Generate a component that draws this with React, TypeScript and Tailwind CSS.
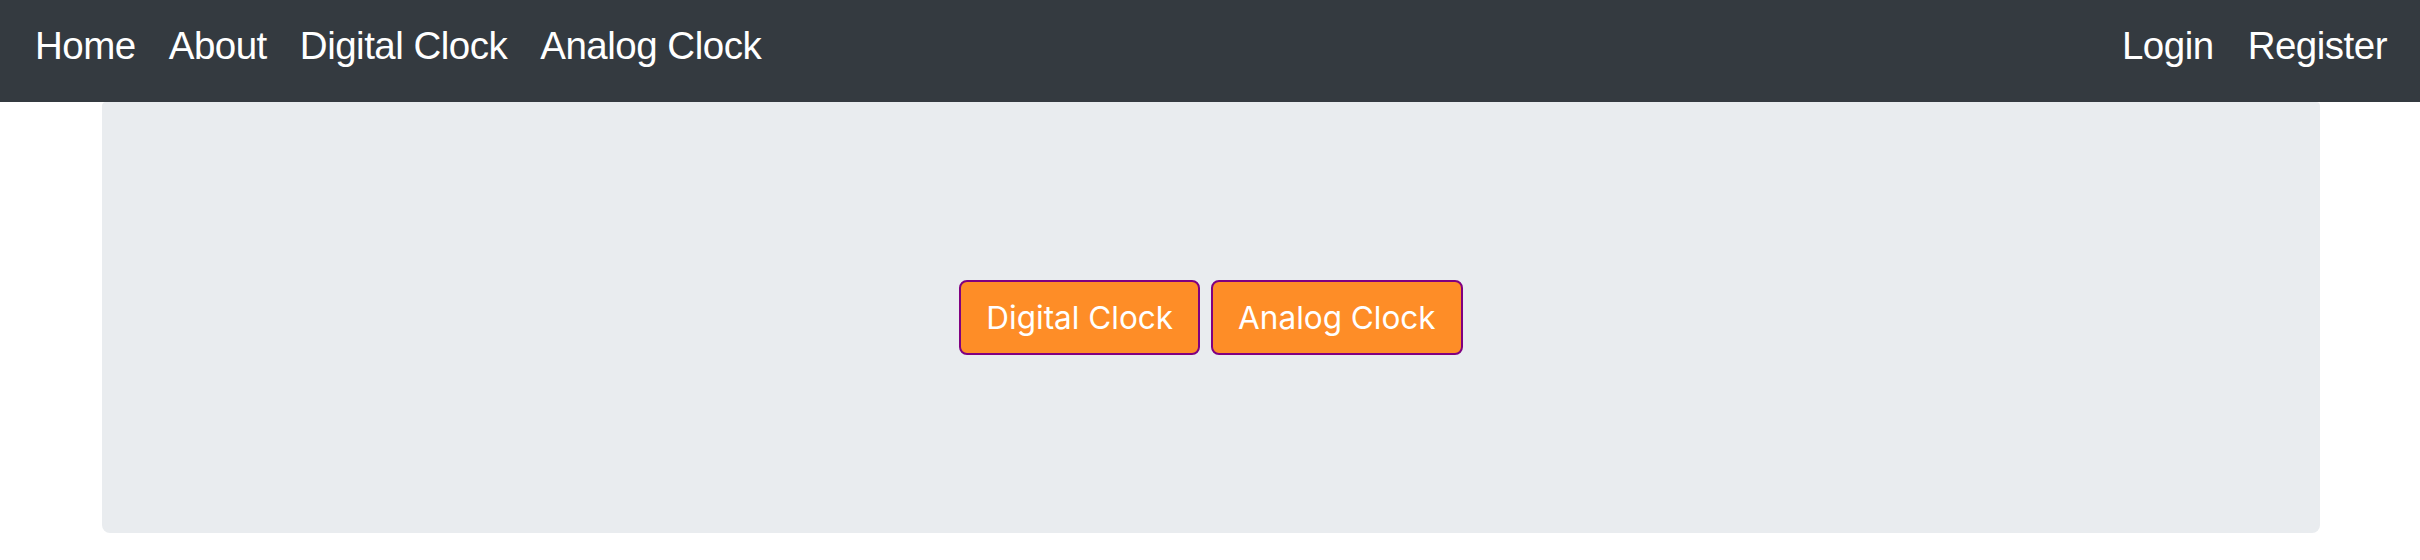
import React from "react";

const navLeft = ["Home", "About", "Digital Clock", "Analog Clock"];
const navRight = ["Login", "Register"];

const ClockButton = ({ label }: { label: string }) => (
  <button
    type="button"
    className="h-[75px] rounded-[8px] border-2 border-[#800080] bg-[#fe8d27] px-[25px] text-[31.5px] leading-none text-white [font-family:Inter,Roboto,sans-serif]">
    {label}
  </button>
);

export default function App() {
  return (
    <div className="min-h-[560px] w-full bg-white [font-family:'Liberation_Sans',Arial,sans-serif]">
      <nav className="flex h-[102px] items-start justify-between bg-[#343a40] pl-[35px] pr-[33px] pt-[27px]">
        <ul className="flex gap-[33px]">
          {navLeft.map((item) => (
            <li key={item} className="text-[38.5px] leading-none tracking-[-0.5px] text-white">
              {item}
            </li>
          ))}
        </ul>
        <ul className="flex gap-[34px]">
          {navRight.map((item) => (
            <li key={item} className="text-[38.5px] leading-none tracking-[-0.5px] text-white">
              {item}
            </li>
          ))}
        </ul>
      </nav>

      <main className="px-[100px]">
        <section className="ml-[2px] flex h-[431px] items-center justify-center gap-[11px] rounded-b-[8px] rounded-t-[4px] bg-[#e9ecef]">
          <ClockButton label="Digital Clock" />
          <ClockButton label="Analog Clock" />
        </section>
      </main>
    </div>
  );
}
